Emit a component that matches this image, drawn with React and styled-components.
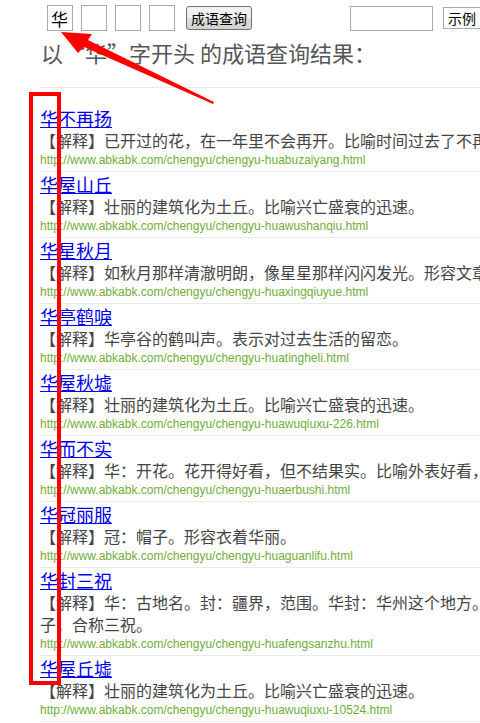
import React from "react";
import styled, { createGlobalStyle } from "styled-components";

const Global = createGlobalStyle`
  html, body { margin: 0; padding: 0; background: #fff; overflow: hidden; }
  body {
    font-family: "Noto Sans CJK SC", "Liberation Sans", sans-serif;
    text-spacing-trim: space-all;
  }
`;

const Page = styled.div`
  position: relative;
  width: 760px;
`;

const Toolbar = styled.form`
  display: flex;
  align-items: center;
  padding: 5px 0 0 47px;
  height: 26px;
`;

const CharBox = styled.input`
  box-sizing: border-box;
  width: 26px;
  height: 26px;
  margin: 0 8px 0 0;
  padding: 0 0 0 3px;
  border: 1px solid #a9a9a9;
  font: 17px "Noto Sans CJK SC", sans-serif;
  color: #000;
  outline: none;
`;

const QueryButton = styled.button`
  box-sizing: border-box;
  margin-left: 3px;
  width: 66px;
  height: 24px;
  padding: 0;
  border: 1px solid #707070;
  border-radius: 3px;
  background: linear-gradient(#f4f4f4, #ececec 50%, #dedede 50%, #d2d2d2);
  font: 14px "Noto Sans CJK SC", sans-serif;
  color: #000;
  line-height: 20px;
`;

const SearchInput = styled.input`
  box-sizing: border-box;
  margin-left: 98px;
  width: 83px;
  height: 25px;
  border: 1px solid #a9a9a9;
  outline: none;
`;

const Select = styled.select`
  box-sizing: border-box;
  appearance: none;
  margin-left: 10px;
  width: 70px;
  height: 22px;
  padding: 0 0 0 4px;
  border: 1px solid #a9a9a9;
  border-radius: 0;
  background: #fff;
  font: 14px "Noto Sans CJK SC", sans-serif;
  color: #000;
`;

const Heading = styled.h2`
  margin: 7px 0 0 41px;
  font: 400 22px/28px "Noto Sans CJK SC", sans-serif;
  color: #555;
`;

const ResultList = styled.ul`
  list-style: none;
  margin: 21px 0 0 39px;
  padding: 18px 0 0 1px;
  width: 681px;
  border-top: 1px solid #ebebeb;
`;

const Item = styled.li`
  padding: 1px 0 2px 0;
  border-bottom: 1px solid #ebebeb;
`;

const Title = styled.a`
  display: block;
  font-size: 18px;
  line-height: 22px;
  color: #0000ee;
  text-decoration: underline;
  text-decoration-thickness: 1px;
  text-underline-offset: 1px;
`;

const Explain = styled.p`
  margin: 0;
  font-size: 16px;
  line-height: 22px;
  color: #444;
`;

const Url = styled.div`
  font: 12px/18px "Liberation Sans", Arial, sans-serif;
  color: #70ad38;
`;

const Overlay = styled.svg`
  position: absolute;
  left: 0;
  top: 0;
  width: 480px;
  height: 723px;
  pointer-events: none;
`;

const items = [
  ["华不再扬", "已开过的花，在一年里不会再开。比喻时间过去了不再回来。", "huabuzaiyang"],
  ["华屋山丘", "壮丽的建筑化为土丘。比喻兴亡盛衰的迅速。", "huawushanqiu"],
  ["华星秋月", "如秋月那样清澈明朗，像星星那样闪闪发光。形容文章写得清新明快。", "huaxingqiuyue"],
  ["华亭鹤唳", "华亭谷的鹤叫声。表示对过去生活的留恋。", "huatingheli"],
  ["华屋秋墟", "壮丽的建筑化为土丘。比喻兴亡盛衰的迅速。", "huawuqiuxu-226"],
  ["华而不实", "华：开花。花开得好看，但不结果实。比喻外表好看，内容空虚。", "huaerbushi"],
  ["华冠丽服", "冠：帽子。形容衣着华丽。", "huaguanlifu"],
  ["华封三祝", "华：古地名。封：疆界，范围。华封：华州这个地方。华封人祝颂尧多寿、多富、多男子，合称三祝。", "huafengsanzhu"],
  ["华屋丘墟", "壮丽的建筑化为土丘。比喻兴亡盛衰的迅速。", "huawuqiuxu-10524"],
];

export default function App() {
  return (
    <Page>
      <Global />
      <Toolbar onSubmit={(e) => e.preventDefault()}>
        <CharBox defaultValue="华" maxLength={1} />
        <CharBox maxLength={1} />
        <CharBox maxLength={1} />
        <CharBox maxLength={1} />
        <QueryButton type="submit">成语查询</QueryButton>
        <SearchInput />
        <Select defaultValue="示例">
          <option>示例</option>
        </Select>
      </Toolbar>
      <Heading>以“华”字开头 的成语查询结果：</Heading>
      <ResultList>
        {items.map(([name, text, slug]) => (
          <Item key={slug}>
            <Title href="#">{name}</Title>
            <Explain>【解释】{text}</Explain>
            <Url>{`http://www.abkabk.com/chengyu/chengyu-${slug}.html`}</Url>
          </Item>
        ))}
      </ResultList>
      <Overlay viewBox="0 0 480 723">
        <rect x="31" y="94" width="28" height="589" fill="none" stroke="#ff0000" strokeWidth="4" />
        <polygon points="61,32 92,34 88,40 214,102 213,104 84,47 78,53" fill="#ff0000" />
      </Overlay>
    </Page>
  );
}
